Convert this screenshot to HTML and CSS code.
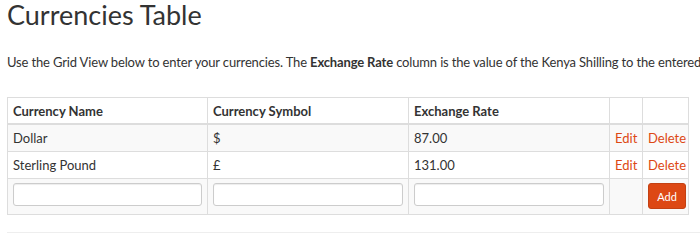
FILE: index.html
```html
<!DOCTYPE html>
<html lang="en">
<head>
    <meta charset="UTF-8">
    <title>Currencies Table</title>
    <link rel="stylesheet" href="styles.css">
</head>
<body>
    <div class="container">
        <h1>Currencies Table</h1>
        <p class="intro">Use the Grid View below to enter your currencies. The <strong>Exchange Rate</strong> column is the value of the Kenya Shilling to the entered currency.</p>

        <table class="grid">
            <colgroup>
                <col class="col-name">
                <col class="col-symbol">
                <col class="col-rate">
                <col class="col-edit">
                <col class="col-delete">
            </colgroup>
            <thead>
                <tr>
                    <th>Currency Name</th>
                    <th>Currency Symbol</th>
                    <th>Exchange Rate</th>
                    <th></th>
                    <th></th>
                </tr>
            </thead>
            <tbody>
                <tr class="odd">
                    <td>Dollar</td>
                    <td>$</td>
                    <td>87.00</td>
                    <td><a href="#">Edit</a></td>
                    <td><a href="#">Delete</a></td>
                </tr>
                <tr>
                    <td>Sterling Pound</td>
                    <td>&pound;</td>
                    <td>131.00</td>
                    <td><a href="#">Edit</a></td>
                    <td><a href="#">Delete</a></td>
                </tr>
                <tr class="odd input-row">
                    <td><input type="text" name="name"></td>
                    <td><input type="text" name="symbol"></td>
                    <td><input type="text" name="rate"></td>
                    <td></td>
                    <td class="add-cell"><button type="button" class="btn-add">Add</button></td>
                </tr>
            </tbody>
        </table>

        <hr>
    </div>
</body>
</html>
```

FILE: styles.css
```css
* {
    box-sizing: border-box;
}

body {
    margin: 0;
    font-family: Lato, "Open Sans", sans-serif;
    font-size: 13px;
    color: #333;
    background: #fff;
    overflow: hidden;
}

.container {
    padding: 0 0 0 7px;
}

h1 {
    margin: 0;
    font-size: 27px;
    font-weight: 400;
    line-height: 30px;
    color: #333;
}

.intro {
    margin: 22px 0 0;
    line-height: 20px;
    letter-spacing: -0.15px;
    white-space: nowrap;
}

.grid {
    margin-top: 25px;
    width: 681px;
    table-layout: fixed;
    border-collapse: collapse;
    border: 1px solid #ddd;
}

.col-name { width: 200px; }
.col-symbol { width: 201px; }
.col-rate { width: 201px; }
.col-edit { width: 33px; }
.col-delete { width: 46px; }

.grid th,
.grid td {
    padding: 4px 5px;
    line-height: 18px;
    text-align: left;
    border: 1px solid #ddd;
    white-space: nowrap;
}

.grid th {
    padding-bottom: 3px;
    border-bottom-width: 2px;
    font-weight: 700;
}

.grid tr.odd td {
    background: #f9f9f9;
}

.grid a {
    color: #dd4814;
    text-decoration: none;
}

.input-row td {
    vertical-align: top;
    padding-top: 4px;
    padding-bottom: 5px;
}

.input-row input {
    display: block;
    width: 100%;
    height: 23px;
    border: 1px solid #ccc;
    border-radius: 3px;
    background: #fff;
    box-shadow: inset 0 1px 1px rgba(0, 0, 0, 0.075);
}

.add-cell {
    padding-left: 2px;
}

.btn-add {
    display: block;
    width: 38px;
    height: 26px;
    padding: 0;
    border: 1px solid #c34113;
    border-radius: 3px;
    background: #dd4814;
    color: #fff;
    font-family: inherit;
    font-size: 11px;
}

hr {
    margin: 17px 0 0 0;
    border: 0;
    border-top: 1px solid #eee;
}
```
